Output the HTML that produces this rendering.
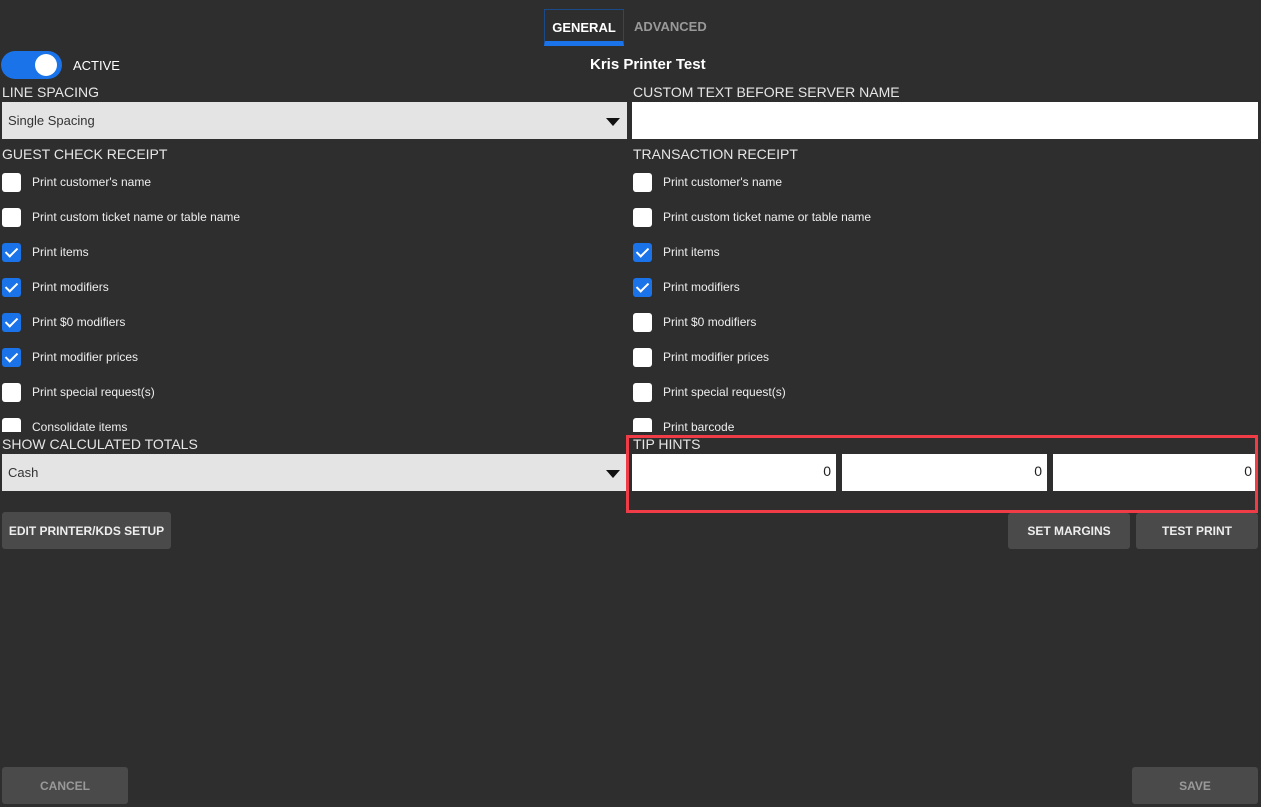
<!DOCTYPE html><html><head><style>
*{box-sizing:border-box;margin:0;padding:0}
body{width:1261px;height:807px;background:#2e2e2e;font-family:"Liberation Sans",sans-serif;color:#fff;position:relative;overflow:hidden}
.a{position:absolute}
.lbl{font-size:14px;color:#e6e6e6;font-weight:300}
.sel{background:#e4e4e4;color:#333;font-size:13px;padding-left:6px;display:flex;align-items:center}
.tri{position:absolute;right:7px;top:50%;margin-top:-3px;border-left:7px solid transparent;border-right:7px solid transparent;border-top:8px solid #111}
.cb{position:absolute;width:19px;height:19px;border-radius:3px;background:#fff}
.cb.on{background:#1a73e8}
.cb.on:after{content:"";position:absolute;left:6px;top:2px;width:5px;height:10px;border:solid #fff;border-width:0 2.5px 2.5px 0;transform:rotate(45deg)}
.row{position:absolute;height:35px;font-size:12px;color:#eee;white-space:nowrap}
.row span{position:absolute;left:30px;top:2px}
.btn{position:absolute;background:#4a4a4a;border-radius:3px;font-size:12px;font-weight:bold;display:flex;align-items:center;justify-content:center;color:#eee}
.tip{position:absolute;background:#fff;color:#222;font-size:14px;text-align:right;padding:9px 5px 0 0;top:454px;height:37px}
</style></head><body>
<div class="a" style="left:544px;top:9px;width:80px;height:37px;border:1px solid #1a4a8a;border-bottom:5px solid #1a73e8;font-size:13px;font-weight:bold;text-align:center;padding-top:10px">GENERAL</div>
<div class="a" style="left:634px;top:19px;font-size:13px;font-weight:bold;color:#999">ADVANCED</div>
<div class="a" style="left:1px;top:51px;width:61px;height:28px;border-radius:14px;background:#1a73e8"><div class="a" style="left:34px;top:3px;width:22px;height:22px;border-radius:50%;background:#fff"></div></div>
<div class="a" style="left:73px;top:58px;font-size:13px">ACTIVE</div>
<div class="a" style="left:590px;top:56px;font-size:15px;font-weight:bold">Kris Printer Test</div>
<div class="a lbl" style="left:2px;top:84px">LINE SPACING</div>
<div class="a lbl" style="left:633px;top:84px">CUSTOM TEXT BEFORE SERVER NAME</div>
<div class="a sel" style="left:2px;top:102px;width:625px;height:37px">Single Spacing<div class="tri"></div></div>
<div class="a" style="left:632px;top:102px;width:626px;height:37px;background:#fff"></div>
<div class="a lbl" style="left:2px;top:146px">GUEST CHECK RECEIPT</div>
<div class="a lbl" style="left:633px;top:146px">TRANSACTION RECEIPT</div>
<div class="a" style="left:0;top:165px;width:1261px;height:267px;overflow:hidden">
<div class="row" style="left:2px;top:8px"><div class="cb"></div><span>Print customer's name</span></div>
<div class="row" style="left:2px;top:43px"><div class="cb"></div><span>Print custom ticket name or table name</span></div>
<div class="row" style="left:2px;top:78px"><div class="cb on"></div><span>Print items</span></div>
<div class="row" style="left:2px;top:113px"><div class="cb on"></div><span>Print modifiers</span></div>
<div class="row" style="left:2px;top:148px"><div class="cb on"></div><span>Print $0 modifiers</span></div>
<div class="row" style="left:2px;top:183px"><div class="cb on"></div><span>Print modifier prices</span></div>
<div class="row" style="left:2px;top:218px"><div class="cb"></div><span>Print special request(s)</span></div>
<div class="row" style="left:2px;top:253px"><div class="cb"></div><span>Consolidate items</span></div>
<div class="row" style="left:633px;top:8px"><div class="cb"></div><span>Print customer's name</span></div>
<div class="row" style="left:633px;top:43px"><div class="cb"></div><span>Print custom ticket name or table name</span></div>
<div class="row" style="left:633px;top:78px"><div class="cb on"></div><span>Print items</span></div>
<div class="row" style="left:633px;top:113px"><div class="cb on"></div><span>Print modifiers</span></div>
<div class="row" style="left:633px;top:148px"><div class="cb"></div><span>Print $0 modifiers</span></div>
<div class="row" style="left:633px;top:183px"><div class="cb"></div><span>Print modifier prices</span></div>
<div class="row" style="left:633px;top:218px"><div class="cb"></div><span>Print special request(s)</span></div>
<div class="row" style="left:633px;top:253px"><div class="cb"></div><span>Print barcode</span></div>
</div>
<div class="a lbl" style="left:2px;top:436px">SHOW CALCULATED TOTALS</div>
<div class="a lbl" style="left:633px;top:436px">TIP HINTS</div>
<div class="a sel" style="left:2px;top:454px;width:625px;height:37px">Cash<div class="tri"></div></div>
<div class="tip" style="left:632px;width:204px">0</div>
<div class="tip" style="left:842px;width:205px">0</div>
<div class="tip" style="left:1053px;width:204px">0</div>
<div class="a" style="left:626px;top:435px;width:632px;height:78px;border:3px solid #f03c46"></div>
<div class="btn" style="left:2px;top:512px;width:169px;height:37px">EDIT PRINTER/KDS SETUP</div>
<div class="btn" style="left:1008px;top:513px;width:122px;height:36px">SET MARGINS</div>
<div class="btn" style="left:1136px;top:513px;width:122px;height:36px">TEST PRINT</div>
<div class="btn" style="left:2px;top:767px;width:126px;height:37px;color:#999">CANCEL</div>
<div class="btn" style="left:1132px;top:767px;width:126px;height:37px;color:#999">SAVE</div>
</body></html>
